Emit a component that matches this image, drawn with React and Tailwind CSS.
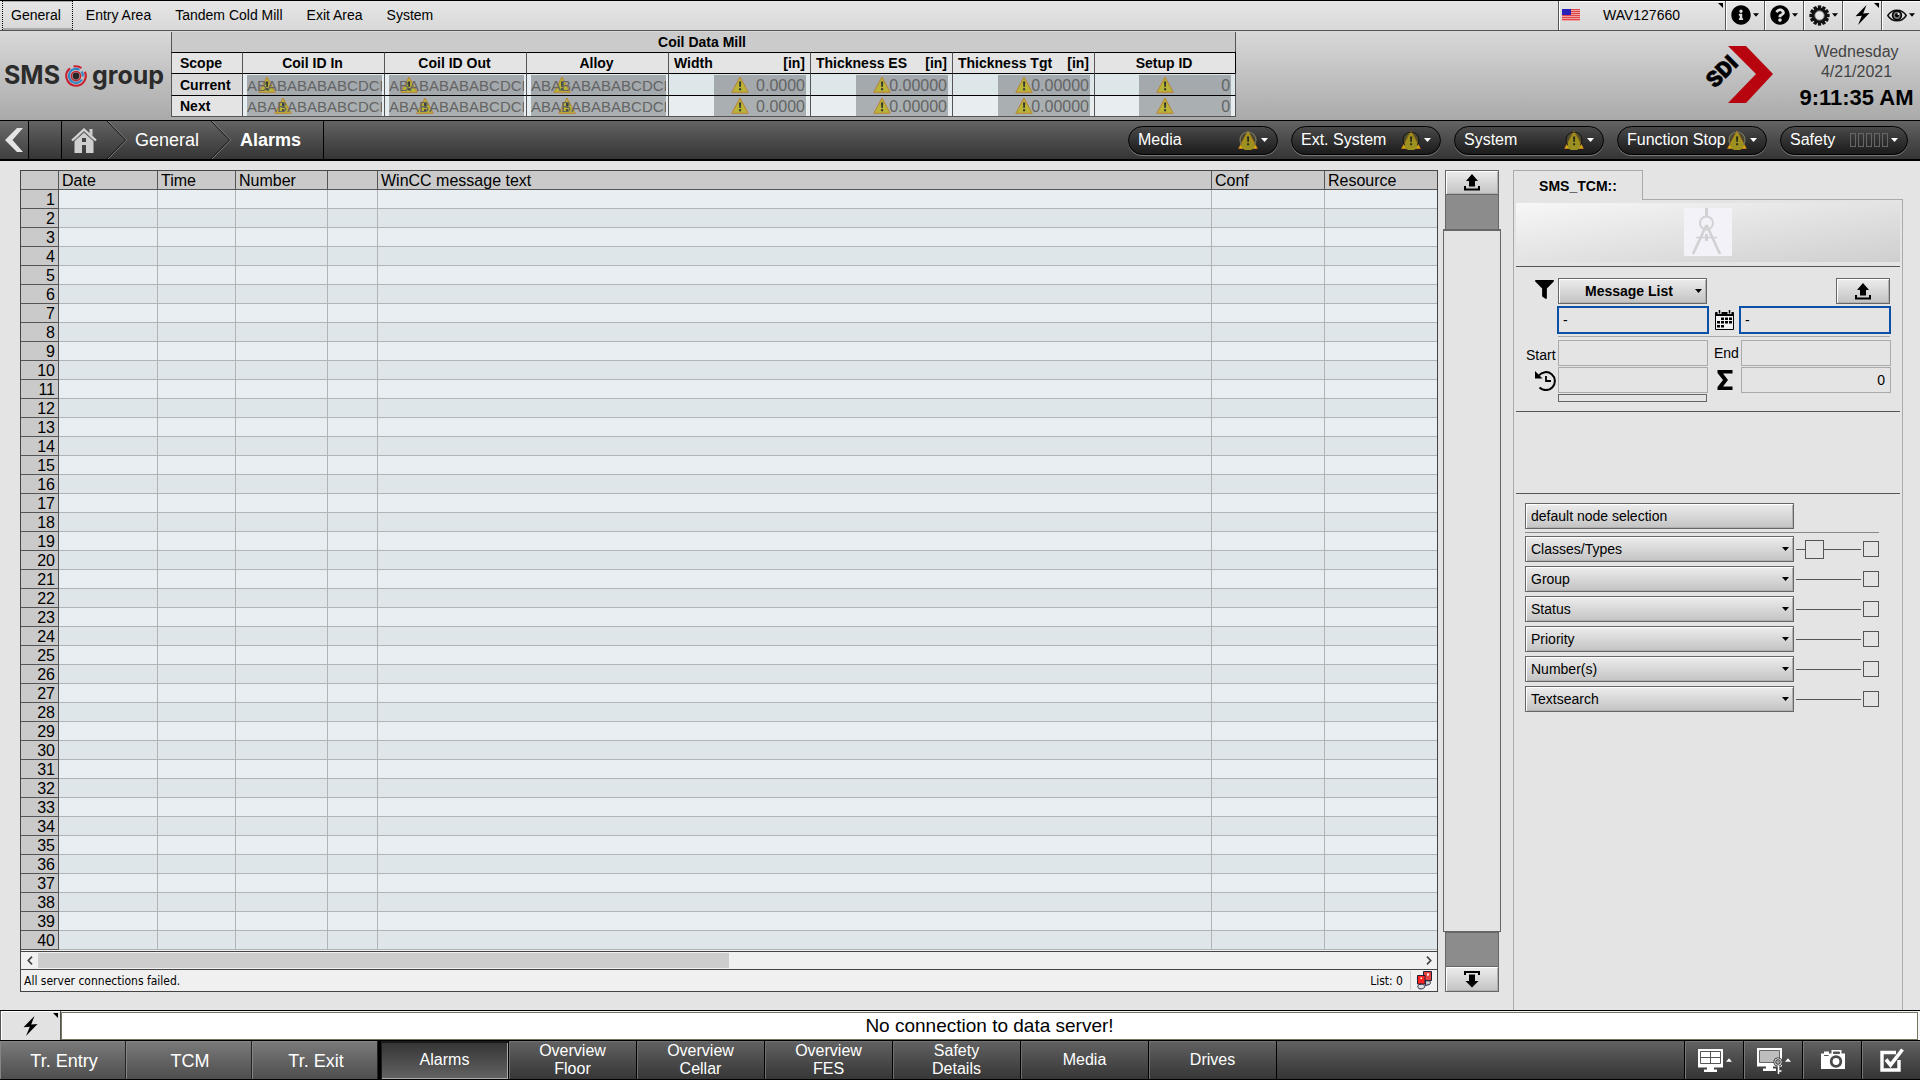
import React from "react";
import { FaFilter, FaInfoCircle, FaQuestionCircle } from "react-icons/fa";

const EDGE = "border border-[#666] bg-gradient-to-b from-[#ededed] to-[#c3c3c3] shadow-[inset_1px_1px_0_#fff,inset_-1px_-1px_0_#b0b0b0]";

function Caret({ className = "", up = false }) {
  return (
    <svg width="7" height="4" viewBox="0 0 7 4" className={"shrink-0 " + className} aria-hidden="true">
      <path d={up ? "M0 4h7L3.5 0z" : "M0 0h7L3.5 4z"} fill="currentColor" />
    </svg>
  );
}

function Corner() {
  return (
    <svg width="5" height="5" viewBox="0 0 5 5" className="absolute top-[2px] right-[2px]" aria-hidden="true">
      <path d="M0 0h5v5z" fill="#000" />
    </svg>
  );
}

function Bolt() {
  return (
    <svg width="15" height="20" viewBox="0 0 15 20" aria-hidden="true">
      <path d="M11.5 0L0.5 11.2L6.8 10.8L3 20L14.5 8L8.2 8.4z" fill="#000" />
    </svg>
  );
}

function Warn({ className = "" }) {
  return (
    <svg width="18" height="17" viewBox="0 0 18 17" className={className} aria-hidden="true">
      <path d="M9 1L17.2 16.3H.8z" fill="#b9b338" stroke="#b98236" strokeWidth="1" />
      <path d="M8 5.5h2.2L9.8 11H8.4zM8.1 12.2h2v2h-2z" fill="#333" />
    </svg>
  );
}

function PillWarn({ dark }) {
  return (
    <svg width="20" height="20" viewBox="0 0 20 20" aria-hidden="true">
      <path d="M10 1L19.3 18.5H.7z" fill="#e2b400" stroke="#b9781c" strokeWidth="1" />
      <circle cx="10" cy="10" r="8" fill="#6f6a20" fillOpacity={dark ? 0.45 : 0.3} stroke={dark ? "#1a1a1a" : "#77775f"} strokeWidth="1.2" />
      <path d="M10 2.5L17 16.3A8 8 0 0 1 3 16.3z" fill="#9c9120" />
      <path d="M9 6.5h2.2L10.8 12H9.4zM9.1 13.2h2v2h-2z" fill="#2c2c1c" />
    </svg>
  );
}

function ArrowUp() {
  return (
    <svg width="16" height="17" viewBox="0 0 16 17" aria-hidden="true">
      <path d="M8 0L14 7H11V12.5H5V7H2zM0 12h2v2.5h12V12h2v4.5H0z" fill="#000" />
    </svg>
  );
}

function ArrowDown() {
  return (
    <svg width="16" height="17" viewBox="0 0 16 17" aria-hidden="true">
      <path d="M0 0h16v4h-2V2H2v2H0zM5 3.5h6V10h3.5L8 16.5L1.5 10H5z" fill="#000" />
    </svg>
  );
}

const TEETH = [0, 30, 60, 90, 120, 150, 180, 210, 240, 270, 300, 330];
function Gear() {
  return (
    <svg width="21" height="21" viewBox="0 0 21 21" aria-hidden="true">
      {TEETH.map((a) => (
        <rect key={a} x="8.8" y="0.4" width="3.4" height="4" fill="#111" transform={`rotate(${a} 10.5 10.5)`} />
      ))}
      <circle cx="10.5" cy="10.5" r="6.2" fill="#e8e8e8" stroke="#111" strokeWidth="3.2" />
      <circle cx="10.5" cy="10.5" r="4.6" fill="none" stroke="#999" />
    </svg>
  );
}

function Eye() {
  return (
    <svg width="20" height="13" viewBox="0 0 20 13" aria-hidden="true">
      <path d="M.8 6.5C5-.6 15-.6 19.2 6.5C15 13.6 5 13.6.8 6.5z" fill="none" stroke="#111" strokeWidth="1.5" />
      <circle cx="10" cy="6.3" r="4.4" fill="#777" stroke="#000" strokeWidth="1.6" />
      <circle cx="10" cy="6.3" r="2" fill="#000" />
      <circle cx="11.4" cy="4.9" r="1" fill="#fff" />
    </svg>
  );
}

function Flag() {
  return (
    <svg width="18" height="12" viewBox="0 0 18 12" aria-hidden="true">
      <rect width="18" height="12" fill="#f0a0a0" />
      {[0, 2, 4, 6, 8, 10].map((y) => (
        <rect key={y} y={y} width="18" height="1" fill="#e04848" />
      ))}
      <rect width="9" height="6" fill="#2a22b8" />
    </svg>
  );
}

function TopBar() {
  const icon = "flex h-[29px] w-[39px] items-center justify-center gap-[2px] border-l border-[#555] pb-[1px] shadow-[inset_1px_1px_0_#fff]";
  const item = "px-[12px] pb-[2px]";
  return (
    <div className="flex h-[31px] items-center border-t border-b border-t-black border-b-[#555] bg-gradient-to-b from-[#e6e6e6] to-[#d8d8d8] text-sm">
      <nav className="flex h-full items-center pl-[2px]">
        <button className="mr-[1px] h-full border-x border-dotted border-black pr-[11px] pb-[2px] pl-2 shadow-[inset_0_1px_0_#aaa,inset_0_-2px_0_#aaa]">General</button>
        <button className={item}>Entry Area</button>
        <button className={item}>Tandem Cold Mill</button>
        <button className={item}>Exit Area</button>
        <button className={item}>System</button>
      </nav>
      <div className="ml-auto flex h-full">
        <button className="relative flex h-[29px] w-[167px] items-center border-l border-[#555] pb-[1px] pl-[3px] shadow-[inset_1px_1px_0_#fff]">
          <Flag />
          <span className="flex-1 pr-[22px] text-center">WAV127660</span>
          <Corner />
        </button>
        <button className={icon} aria-label="Information"><FaInfoCircle size={20} /><Caret className="w-[6px]" /></button>
        <button className={icon} aria-label="Help"><FaQuestionCircle size={20} /><Caret className="w-[6px]" /></button>
        <button className={icon} aria-label="Settings"><Gear /><Caret className="w-[6px]" /></button>
        <button className={icon + " relative"} aria-label="Quick actions"><Bolt /><Corner /></button>
        <button className={icon} aria-label="View"><Eye /><Caret className="w-[6px]" /></button>
      </div>
    </div>
  );
}

function CoilCell({ last, wide, bottom }) {
  return (
    <td className={"border-t border-l border-t-black border-l-[#555] bg-[#e6edf0] p-0 " + (bottom ? "border-b border-b-[#555] " : "") + (last ? "border-r" : "")}>
      <div className={"relative mr-[2px] ml-[4px] h-[20px] overflow-hidden text-[15px] leading-[21px] whitespace-nowrap text-[#646464] " + (bottom ? "bg-[#aab0b1]" : "bg-[#a3a9ad]")}>
        <Warn className={"absolute top-[1px] " + (bottom ? "left-[27px]" : wide ? "left-[22px]" : "left-[11px]")} />
        <span className="relative">ABABABABABCDCI</span>
      </div>
    </td>
  );
}

function NumCell({ value, bottom, last }) {
  return (
    <td className={"border-t border-l border-t-black border-l-[#555] p-0 " + (bottom ? "border-b border-b-[#555] bg-[#e8eef0] " : "bg-[#dde6e9] ") + (last ? "border-r border-r-[#555]" : "")}>
      <div className={"relative mr-[4px] ml-auto h-[20px] w-[92px] pr-[1px] text-right text-base leading-[21px] text-[#646464] " + (bottom ? "bg-[#aab0b1]" : "bg-[#a3a9ad]")}>
        <Warn className="absolute top-[1px] left-[17px]" />
        <span className="relative">{value}</span>
      </div>
    </td>
  );
}

function CoilTable() {
  const th = "border-t border-l border-t-black border-l-[#555] bg-[#e4e4e4] p-0 font-bold";
  const scope = "border-t border-l border-t-black border-l-[#555] p-0 pl-2 text-left font-bold";
  return (
    <table className="mt-[1px] ml-auto w-[1065px] table-fixed border-separate border-spacing-0 self-start text-sm leading-[18px] text-black">
      <colgroup>
        <col className="w-[71px]" />
        {[1, 2, 3, 4, 5, 6, 7].map((n) => <col key={n} className="w-[142px]" />)}
      </colgroup>
      <thead>
        <tr className="h-[20px]">
          <th colSpan={8} className="border-x border-[#555] bg-[#cbcbcb] p-0 pr-[3px] font-bold">Coil Data Mill</th>
        </tr>
        <tr className="h-[21px]">
          <th className={th + " pl-2 text-left"}>Scope</th>
          <th className={th + " pr-[2px]"}>Coil ID In</th>
          <th className={th + " pr-[2px]"}>Coil ID Out</th>
          <th className={th + " pr-[2px]"}>Alloy</th>
          {["Width", "Thickness ES", "Thickness Tgt"].map((t) => (
            <th key={t} className={th}>
              <div className="flex justify-between pr-[5px] pl-[5px]"><span>{t}</span><span>[in]</span></div>
            </th>
          ))}
          <th className={th + " border-r pr-[2px]"}>Setup ID</th>
        </tr>
      </thead>
      <tbody>
        <tr className="h-[22px]">
          <th className={scope + " bg-[#dadada]"}>Current</th>
          <CoilCell /><CoilCell /><CoilCell wide />
          <NumCell value="0.0000" /><NumCell value="0.00000" /><NumCell value="0.00000" /><NumCell value="0" last />
        </tr>
        <tr className="h-[22px]">
          <th className={scope + " border-b border-b-[#555] bg-[#e4e4e4]"}>Next</th>
          <CoilCell bottom /><CoilCell bottom /><CoilCell bottom />
          <NumCell value="0.0000" bottom /><NumCell value="0.00000" bottom /><NumCell value="0.00000" bottom /><NumCell value="0" bottom last />
        </tr>
      </tbody>
    </table>
  );
}

function Header() {
  return (
    <header className="flex h-[89px] bg-gradient-to-b from-[#d9d9d9] to-[#aaa]">
      <div className="flex w-[171px] shrink-0 items-center gap-[5px] pl-[4px] text-[25px] font-bold text-[#2b2b2b] font-['Inter',sans-serif]">
        <span>SMS</span>
        <svg width="22" height="22" viewBox="0 0 22 22" className="shrink-0" aria-hidden="true">
          <g fill="none" strokeWidth="2.1">
            <path d="M5 3.400A9.700 9.700 0 0 0 11 20.700A9.700 9.700 0 0 0 19.800 6.800" stroke="#c8202f" />
            <path d="M8.500 1.600A9.700 9.700 0 0 1 16.500 3" stroke="#c8202f" />
            <path d="M14.500 4.800A7 7 0 1 0 17 14.500" stroke="#2f86c5" />
            <path d="M16.500 6.500A7 7 0 0 1 18 11.500" stroke="#2f86c5" />
            <circle cx="11" cy="11" r="4.600" stroke="#c8202f" strokeWidth="1.500" />
          </g>
          <circle cx="11" cy="11" r="3.400" fill="#262626" />
        </svg>
        <span>group</span>
      </div>
      <div className="w-[1065px] shrink-0"><CoilTable /></div>
      <div className="ml-auto flex">
        <svg width="72" height="60" viewBox="0 0 72 60" className="mt-[14px] mr-[19px]" role="img" aria-label="SDI">
          <path d="M26 1H44L71 29L44 58H26L54 29z" fill="#b8040f" />
          <text x="13" y="44" transform="rotate(-45 13 44)" fontFamily="Roboto, sans-serif" fontWeight="900" fontSize="22" fill="#000" stroke="#000" strokeWidth="0.6">SDI</text>
        </svg>
        <div className="w-[127px] pt-[11px] text-center whitespace-nowrap text-[#444]">
          <div className="text-base leading-5">Wednesday</div>
          <div className="text-base leading-5">4/21/2021</div>
          <div className="mt-[4px] text-[22px] leading-6 font-bold text-black">9:11:35 AM</div>
        </div>
      </div>
    </header>
  );
}

function Chevron() {
  return (
    <svg width="20" height="38" viewBox="0 0 20 38" className="shrink-0" aria-hidden="true">
      <path d="M1 0L19.5 19L1 38" fill="none" stroke="#888" />
      <path d="M0 0L18.5 19L0 38" fill="none" stroke="#111" />
    </svg>
  );
}

function Pill({ label, children, width = "w-[150px]" }) {
  return (
    <button className={"flex h-[29px] items-center rounded-full border border-black bg-gradient-to-b from-[#4a4a4a] to-[#1b1b1b] pr-[9px] pl-[9px] text-base whitespace-nowrap text-white shadow-[0_1px_0_#777] " + width}>
      <span>{label}</span>
      <span className="ml-auto flex items-center gap-[3px]">{children}<Caret /></span>
    </button>
  );
}

function NavBar() {
  return (
    <nav className="flex h-[41px] items-center border-t border-b-2 border-black bg-gradient-to-b from-[#636363] to-[#353535] text-lg text-white">
      <button className="flex h-full w-[29px] items-center justify-center border-r border-black bg-white/5" aria-label="Back">
        <svg width="18" height="24" viewBox="0 0 18 24" aria-hidden="true">
          <path d="M12 0H18L7.500 12L18 24H12L0 12z" fill="#e4e4e4" />
        </svg>
      </button>
      <div className="h-full w-[33px] border-r border-black" />
      <button className="flex h-full w-[45px] items-center justify-center pr-[2px]" aria-label="Home">
        <svg width="26" height="25" viewBox="0 0 26 25" aria-hidden="true">
          <path d="M13 3.500L22.500 12V25H15V17h-4v8H3.500V12z" fill="#cfcfcf" />
          <path d="M1 12.500L13 1.500L25 12.500" fill="none" stroke="#d6d6d6" strokeWidth="2.200" />
          <path d="M18.500 1h3v7l-3-2.700z" fill="#cfcfcf" />
          <path d="M11 10h4v4h-4z" fill="#444" />
          <path d="M3 13.300L13 4.300L23 13.300" fill="none" stroke="#444" strokeWidth="0.800" />
        </svg>
      </button>
      <Chevron />
      <button className="pr-[12px] pl-[8px]">General</button>
      <Chevron />
      <button className="h-full border-r border-black pr-[22px] pl-[9px] font-bold">Alarms</button>
      <div className="ml-auto flex items-center gap-[13px] pr-[12px]">
        <Pill label="Media"><PillWarn /></Pill>
        <Pill label="Ext. System"><PillWarn dark /></Pill>
        <Pill label="System"><PillWarn dark /></Pill>
        <Pill label="Function Stop"><PillWarn /></Pill>
        <Pill label="Safety" width="w-[128px]">
          <span className="flex gap-[2px]">
            {[0, 1, 2, 3, 4].map((n) => <span key={n} className="h-[14px] w-[6px] border border-[#666]" />)}
          </span>
        </Pill>
      </div>
    </nav>
  );
}

const ROWS = Array.from({ length: 40 }, (_, i) => i + 1);

function AlarmTable() {
  const th = "border-r border-b border-[#555] p-0 pt-[2px] pl-[3px] text-left font-normal";
  const td = "border-r border-b border-[#b0b4b6] p-0";
  return (
    <div className="flex min-w-0 flex-1 flex-col border border-[#444] bg-[#f0f0f0]">
      <table className="w-full table-fixed border-separate border-spacing-0 text-base leading-[16px]">
        <colgroup>
          <col className="w-[38px]" /><col className="w-[99px]" /><col className="w-[78px]" /><col className="w-[92px]" />
          <col className="w-[50px]" /><col /><col className="w-[113px]" /><col className="w-[112px]" />
        </colgroup>
        <thead>
          <tr className="h-[19px] bg-[#cacaca]">
            <th className={th} /><th className={th}>Date</th><th className={th}>Time</th><th className={th}>Number</th>
            <th className={th} /><th className={th}>WinCC message text</th><th className={th}>Conf</th>
            <th className="border-b border-[#555] p-0 pt-[2px] pl-[3px] text-left font-normal">Resource</th>
          </tr>
        </thead>
        <tbody>
          {ROWS.map((n) => (
            <tr key={n} className="h-[19px] odd:bg-[#e8eef1] even:bg-[#dee6e9]">
              <th className="border-r border-b border-[#555] bg-[#cacaca] p-0 pt-[2px] pr-[3px] text-right font-normal">{n}</th>
              <td className={td} /><td className={td} /><td className={td} /><td className={td} /><td className={td} /><td className={td} />
              <td className="border-b border-[#b0b4b6] p-0" />
            </tr>
          ))}
        </tbody>
      </table>
      <div className="mt-[1px] flex h-[18px] items-center border-t border-[#444]">
        <button className="flex h-full w-[17px] items-center justify-center" aria-label="Scroll left">
          <svg width="6" height="9" viewBox="0 0 6 9" aria-hidden="true"><path d="M5 .7L1.300 4.500L5 8.300" fill="none" stroke="#444" strokeWidth="1.700" /></svg>
        </button>
        <div className="h-[15px] flex-1"><div className="h-full w-1/2 bg-[#cdcdcd]" /></div>
        <button className="flex h-full w-[17px] items-center justify-center" aria-label="Scroll right">
          <svg width="6" height="9" viewBox="0 0 6 9" aria-hidden="true"><path d="M1 .7L4.700 4.500L1 8.300" fill="none" stroke="#444" strokeWidth="1.700" /></svg>
        </button>
      </div>
      <div className="flex h-[22px] items-center border-t border-[#444] pl-[3px] text-xs font-['DejaVu_Sans_Condensed','DejaVu_Sans',sans-serif]">
        <span>All server connections failed.</span>
        <span className="ml-auto pr-[7px]">List: 0</span>
        <span className="flex h-[19px] w-[27px] items-center justify-center border-l border-[#ccc]">
          <svg width="15" height="19" viewBox="0 0 15 19" aria-hidden="true">
            <path d="M6.500 .5h8v9h-8z" fill="#e84040" stroke="#223" />
            <path d="M.5 4.500h7.500v8.500H.5z" fill="#f22" stroke="#223" />
            <path d="M10 2.500h2v2h-2zM3.500 6.500h1.500v1.500H3.500z" fill="#fff" />
            <path d="M8.500 10c4-1 6.500.5 4 3.500l-4 1z" fill="#ccc" stroke="#224" />
            <path d="M.7 15.500c0-3 7-3 7 0s-7 3.500-7 0z" fill="#ddd" stroke="#224" />
          </svg>
        </span>
      </div>
    </div>
  );
}

function PageScroller() {
  return (
    <div className="ml-[5px] flex w-[58px] shrink-0 flex-col">
      <button className={"mr-[2px] ml-[2px] flex h-[25px] items-center justify-center " + EDGE} aria-label="Page up"><ArrowUp /></button>
      <div className="mr-[2px] ml-[2px] h-[34px] border-x border-[#666] bg-[#8c8c8c]" />
      <div className="flex-1 border border-t-2 border-[#666] bg-[#e4e4e4]" />
      <div className="mr-[2px] ml-[2px] h-[34px] border-x border-t border-[#666] bg-[#8c8c8c]" />
      <button className={"mr-[2px] ml-[2px] flex h-[26px] items-center justify-center " + EDGE} aria-label="Page down"><ArrowDown /></button>
    </div>
  );
}

function Select({ label, boxClass = "", className = "" }) {
  return (
    <div className={"relative " + boxClass}>
      <select aria-label={label} className={"h-[26px] w-full appearance-none rounded-none text-black outline-none " + EDGE + " " + className}>
        <option>{label}</option>
      </select>
      <Caret className="pointer-events-none absolute top-[11px] right-[5px]" />
    </div>
  );
}

function FilterSection() {
  const field = "h-[26px] w-[150px] border border-[#aaa] bg-transparent px-[5px] text-sm outline-none";
  const date = "h-[28px] w-[152px] border-2 border-[#0a50a8] bg-transparent px-[4px] text-sm outline-none";
  return (
    <section className="pt-[11px] pr-[10px] pb-[9px] pl-[12px] text-sm">
      <div className="flex h-[26px]">
        <div className="flex w-[32px] shrink-0 justify-center pt-[2px] pl-[5px]"><FaFilter size={19} /></div>
        <Select label="Message List" boxClass="w-[149px]" className="pl-[26px] text-left font-bold" />
        <button className={"ml-auto flex h-[26px] w-[54px] items-center justify-center " + EDGE} aria-label="Load list"><ArrowUp /></button>
      </div>
      <div className="mt-[2px] -mr-[1px] ml-[31px] flex h-[28px] items-center justify-between">
        <input className={date} defaultValue="-" aria-label="Start date" />
        <svg width="19" height="20" viewBox="0 0 19 20" aria-hidden="true">
          <path d="M.5 2.500h18v17H.5z" fill="#f2f2f2" stroke="#000" />
          <path d="M1 2h17v4H1z" fill="#000" />
          <path d="M4.500 0v4M14.500 0v4" stroke="#e4e4e4" strokeWidth="4" />
          <path d="M4.500 0v3.500M14.500 0v3.500" stroke="#000" strokeWidth="1.500" />
          <path d="M6 7.500h3v2.500H6zM10 7.500h3v2.500h-3zM14 7.500h3v2.500h-3zM2 11h3v2.500H2zM6 11h3v2.500H6zM10 11h3v2.500h-3zM14 11h3v2.500h-3zM2 15h3v2.500H2zM6 15h3v2.500H6z" fill="#000" />
        </svg>
        <input className={date} defaultValue="-" aria-label="End date" />
      </div>
      <div className="mt-[2px] mb-[3px] ml-[32px] h-[1px] bg-[#aaa]" />
      <div className="flex items-center">
        <label htmlFor="start" className="w-[32px] shrink-0 pt-[4px]">Start</label>
        <input id="start" className={field} />
        <label htmlFor="end" className="w-[33px] shrink-0 pl-[6px]">End</label>
        <input id="end" className={field} />
      </div>
      <div className="mt-[1px] flex items-center">
        <div className="flex w-[32px] shrink-0 justify-end pr-[2px]">
          <svg width="21" height="21" viewBox="0 0 21 21" aria-hidden="true">
            <path d="M3.800 5.500A9 9 0 1 1 4.500 17.500" fill="none" stroke="#000" strokeWidth="2" />
            <path d="M0 1v7.500h7.500z" fill="#000" />
            <path d="M11 6v5h5" fill="none" stroke="#000" strokeWidth="1.800" />
          </svg>
        </div>
        <input className={field} aria-label="History" />
        <div className="flex w-[33px] shrink-0 justify-center pl-[1px]">
          <svg width="16" height="20" viewBox="0 0 16 20" aria-hidden="true">
            <path d="M.5 0H15.500V3.500H6L11 10L6 16.500H15.500V20H.5V17L6 10L.5 3z" fill="#000" />
          </svg>
        </div>
        <input className={field + " text-right"} defaultValue="0" aria-label="Sum" />
      </div>
      <div className="mt-[1px] ml-[32px] h-[8px] w-[149px] border border-[#666]" />
    </section>
  );
}

const SELECTIONS = ["Classes/Types", "Group", "Status", "Priority", "Number(s)", "Textsearch"];
const BOX = "shrink-0 appearance-none border border-[#555] bg-[#e4e4e4] checked:bg-[#555]";

function NodeSection() {
  return (
    <section className="pt-[9px] pr-[21px] pl-[11px] text-sm">
      <button className={"h-[26px] w-[269px] pl-[5px] text-left " + EDGE}>default node selection</button>
      <div className="mt-[3px] mb-[3px] h-[1px] bg-[#888]" />
      <div className="flex flex-col gap-[4px]">
        {SELECTIONS.map((s, i) => (
          <div key={s} className="flex items-center">
            <Select label={s} boxClass="w-[269px]" className="pl-[5px]" />
            <div className="ml-[2px] flex flex-1 items-center pr-[2px]">
              {i === 0 && (
                <>
                  <div className="h-[1px] w-[9px] bg-[#555]" />
                  <input type="checkbox" aria-label="Classes/Types link" className={"h-[19px] w-[19px] " + BOX} />
                </>
              )}
              <div className="h-[1px] flex-1 bg-[#555]" />
            </div>
            <input type="checkbox" aria-label={s + " active"} className={"h-[16px] w-[16px] " + BOX} />
          </div>
        ))}
      </div>
    </section>
  );
}

function SidePanel() {
  return (
    <aside className="mr-[17px] ml-[12px] flex w-[390px] shrink-0 flex-col">
      <div className="flex h-[30px]">
        <button className="w-[130px] border-x border-t border-[#aaa] text-sm font-bold">SMS_TCM::</button>
        <div className="flex-1 border-b border-[#aaa]" />
      </div>
      <div className="flex-1 border-x border-[#aaa] px-[2px] pt-[3px]">
        <div className="flex h-[59px] items-center justify-center bg-gradient-to-br from-[#f7f7f7] to-[#cfcfcf] pb-[1px]">
          <svg width="48" height="48" viewBox="0 0 48 48" aria-hidden="true">
            <rect width="48" height="48" fill="#f3f2f8" />
            <g fill="none" stroke="#d2d2d4">
              <path d="M22.500 0v9" strokeWidth="3" />
              <circle cx="22.500" cy="15" r="6.500" strokeWidth="2" />
              <path d="M22.500 17L9 46M22.500 17L36 46" strokeWidth="2.800" />
              <path d="M12 29.500h21" strokeWidth="1.500" />
              <path d="M22.500 26v7" strokeWidth="3" />
            </g>
          </svg>
        </div>
        <div className="mt-[4px] h-[1px] bg-[#555]" />
        <div className="-ml-[2px]"><FilterSection /></div>
        <div className="h-[83px] border-y border-[#555]" />
        <div className="-ml-[2px]"><NodeSection /></div>
      </div>
    </aside>
  );
}

const FOOT = "flex h-full w-[128px] items-center justify-center border-r border-black text-center text-base leading-[18px] text-white ";

function Footer() {
  const tool = "flex h-full w-[59px] items-center justify-center gap-[3px] border-l border-black pl-[2px] text-white shadow-[inset_1px_1px_0_#777]";
  const raised = "bg-gradient-to-b from-[#626262] to-[#363636] shadow-[inset_1px_1px_0_#707070]";
  return (
    <footer>
      <div className="flex h-[30px] border-t border-black bg-[#f4f4f4]">
        <button className="relative flex w-[61px] items-center justify-center border-x border-[#555] bg-[#e2e2e2] shadow-[inset_1px_1px_0_#fff]" aria-label="Quick actions"><Bolt /><Corner /></button>
        <div className="mt-[1px] mr-[2px] flex flex-1 items-center justify-center border border-[#77755f] bg-white text-[19px] leading-6">No connection to data server!</div>
      </div>
      <div className="flex h-[40px] border-y border-black bg-gradient-to-b from-[#626262] to-[#343434]">
        {["Tr. Entry", "TCM", "Tr. Exit"].map((t) => (
          <button key={t} className="h-full w-[126px] border-r border-[#222] bg-gradient-to-b from-[#7b7b7b] to-[#4e4e4e] pt-[2px] pl-[3px] text-lg text-white shadow-[inset_1px_1px_0_#858585]">{t}</button>
        ))}
        <div className="w-[3px] bg-black" />
        <button className={FOOT + "bg-gradient-to-b from-[#333] to-[#646464] shadow-[inset_1px_2px_0_#1a1a1a,inset_-1px_-1px_0_#aaa]"}>Alarms</button>
        <button className={FOOT + raised}>Overview<br />Floor</button>
        <button className={FOOT + raised}>Overview<br />Cellar</button>
        <button className={FOOT + raised}>Overview<br />FES</button>
        <button className={FOOT + raised}>Safety<br />Details</button>
        <button className={FOOT + raised}>Media</button>
        <button className={FOOT + raised}>Drives</button>
        <div className="ml-auto flex">
          <button className={tool} aria-label="Screen layout">
            <svg width="25" height="23" viewBox="0 0 25 23" aria-hidden="true">
              <path d="M0 0h25v18.500H0z" fill="#fff" />
              <path d="M2.500 2.500h20v12h-20zM12.500 2.500v12M2.500 8.500h20" fill="none" stroke="#555" />
              <path d="M9 18h7v2.500h3V23H6v-2.500h3z" fill="#fff" />
            </svg>
            <Caret up className="w-[6px]" />
          </button>
          <button className={tool} aria-label="Screen lock">
            <svg width="25" height="26" viewBox="0 0 25 26" className="mt-[2px]" aria-hidden="true">
              <path d="M0 0h25v18.500H0z" fill="#fff" />
              <path d="M2.500 2.500h20v12h-20z" fill="#bdbdbd" stroke="#666" />
              <path d="M9 18h7v2.500h3V23H6v-2.500h3z" fill="#fff" />
              <circle cx="21" cy="14" r="3.300" fill="#999" stroke="#222" strokeWidth="2.500" />
              <circle cx="21" cy="14" r="3.300" fill="none" stroke="#fff" />
              <path d="M21.500 17.500V26M21.500 23h3" stroke="#fff" strokeWidth="1.500" />
            </svg>
            <Caret up className="w-[6px]" />
          </button>
          <button className={tool} aria-label="Screenshot">
            <svg width="24" height="20" viewBox="0 0 24 20" aria-hidden="true">
              <path d="M0 3.500h3V1.500h5v2h2.500V0h10v3.500H24V19H0z" fill="#fff" />
              <path d="M12.500 2h6v1.500h-6zM3 5.500h4.500" fill="#555" stroke="#555" />
              <circle cx="15" cy="11.500" r="4.800" fill="#fff" stroke="#4a4a4a" strokeWidth="2.800" />
            </svg>
          </button>
          <button className={tool} aria-label="Acknowledge">
            <svg width="24" height="24" viewBox="0 0 24 24" aria-hidden="true">
              <path d="M16 4.500H2V22h17V12" fill="none" stroke="#fff" strokeWidth="3.400" />
              <path d="M6 11.500L10.500 17L22.500 1.500" fill="none" stroke="#fff" strokeWidth="3.600" />
            </svg>
          </button>
        </div>
      </div>
    </footer>
  );
}

export default function App() {
  return (
    <div className="flex min-h-screen flex-col bg-[#e4e4e4] text-black font-['Liberation_Sans',Arial,sans-serif]">
      <TopBar />
      <Header />
      <NavBar />
      <main className="flex flex-1 pt-[9px]">
        <div className="flex min-w-0 flex-1 pb-[18px] pl-[20px]">
          <AlarmTable />
          <PageScroller />
        </div>
        <SidePanel />
      </main>
      <Footer />
    </div>
  );
}
